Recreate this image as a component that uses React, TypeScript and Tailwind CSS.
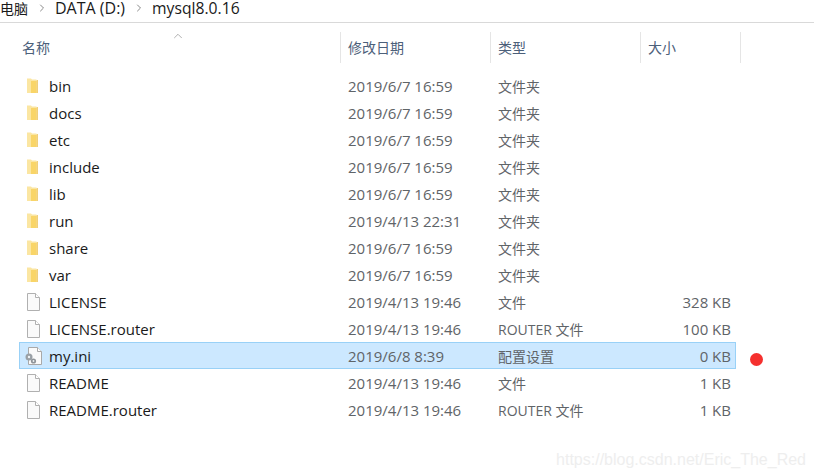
import { ChevronRight, ChevronUp } from "lucide-react";

type Entry = { name: string; date: string; kind: string; size?: string; icon: "folder" | "file" | "ini" };

const entries: Entry[] = [
  { name: "bin", date: "2019/6/7 16:59", kind: "文件夹", icon: "folder" },
  { name: "docs", date: "2019/6/7 16:59", kind: "文件夹", icon: "folder" },
  { name: "etc", date: "2019/6/7 16:59", kind: "文件夹", icon: "folder" },
  { name: "include", date: "2019/6/7 16:59", kind: "文件夹", icon: "folder" },
  { name: "lib", date: "2019/6/7 16:59", kind: "文件夹", icon: "folder" },
  { name: "run", date: "2019/4/13 22:31", kind: "文件夹", icon: "folder" },
  { name: "share", date: "2019/6/7 16:59", kind: "文件夹", icon: "folder" },
  { name: "var", date: "2019/6/7 16:59", kind: "文件夹", icon: "folder" },
  { name: "LICENSE", date: "2019/4/13 19:46", kind: "文件", size: "328 KB", icon: "file" },
  { name: "LICENSE.router", date: "2019/4/13 19:46", kind: "ROUTER 文件", size: "100 KB", icon: "file" },
  { name: "my.ini", date: "2019/6/8 8:39", kind: "配置设置", size: "0 KB", icon: "ini" },
  { name: "README", date: "2019/4/13 19:46", kind: "文件", size: "1 KB", icon: "file" },
  { name: "README.router", date: "2019/4/13 19:46", kind: "ROUTER 文件", size: "1 KB", icon: "file" },
];

function FolderIcon() {
  return (
    <svg width="16" height="18" viewBox="0 0 16 18">
      <path d="M2 1.5h4l1 1h4.5v1.5H13v12H2z" fill="#fbe6a2" />
      <path d="M6 4h5.5v12H6z" fill="#f9d568" />
      <path d="M11.5 3h1.5v13h-1.5z" fill="#f0cf7a" />
    </svg>
  );
}

function FileIcon() {
  return (
    <svg width="16" height="18" viewBox="0 0 16 18">
      <path d="M2.5 0.5h8l4 4v13h-12z" fill="#fafafa" stroke="#b0b0b0" />
      <path d="M10.5 0.5v4h4" fill="#fff" stroke="#b0b0b0" />
    </svg>
  );
}

function IniIcon() {
  return (
    <svg width="17" height="18" viewBox="0 0 17 18">
      <path d="M3.5 0.5h9l4 4v13h-13z" fill="#fafafa" stroke="#a9a9a9" />
      <path d="M12.5 0.5v4h4" fill="#fff" stroke="#a9a9a9" />
      <circle cx="4" cy="10" r="3.5" fill="#9aa0a6" />
      <circle cx="4" cy="10" r="1.2" fill="#eef2f5" />
      <circle cx="8.5" cy="14" r="2.6" fill="#8f9499" />
      <circle cx="8.5" cy="14" r="0.9" fill="#eef2f5" />
    </svg>
  );
}

function Row({ entry }: { entry: Entry }) {
  const selected = entry.name === "my.ini";
  return (
    <div
      className={`flex h-[27px] w-[717px] items-center border ${
        selected ? "border-[#99d1f7] bg-[#cce8ff]" : "border-transparent"
      }`}
    >
      <div className="flex w-[320px] items-center">
        <div className="flex w-[29px] pl-[5px]">
          {entry.icon === "folder" && <FolderIcon />}
          {entry.icon === "file" && <FileIcon />}
          {entry.icon === "ini" && <IniIcon />}
        </div>
        <span className="pt-[2px] text-[15px] text-[#1a1a1a]">{entry.name}</span>
      </div>
      <div className="w-[150px] pl-[8px] pt-[2px] text-[15px] text-[#5f6468]">{entry.date}</div>
      <div className="w-[150px] pl-[8px] pt-[2px] text-[14px] text-[#5f6468]">{entry.kind}</div>
      <div className="w-[91px] pt-[2px] text-right text-[15px] text-[#5f6468]">{entry.size}</div>
    </div>
  );
}

function HeaderCell({ label, width }: { label: string; width: string }) {
  return (
    <div className={`flex h-[31px] items-center border-l border-[#e5e5e5] pl-[7px] text-[14px] text-[#4c607a] ${width}`}>
      {label}
    </div>
  );
}

export default function App() {
  return (
    <div
      className="relative h-[475px] w-[814px] overflow-hidden bg-white"
      style={{ fontFamily: '"Open Sans", "Noto Sans CJK SC", sans-serif' }}
    >
      {/* Breadcrumb */}
      <div className="flex h-[23px] items-start border-b border-[#d9d9d9] leading-[17px] text-[#1a1a1a]">
        <span className="text-[14px]">电脑</span>
        <ChevronRight size={12} strokeWidth={2} className="mx-[7.5px] mt-[2px] text-[#8a8a8a]" />
        <span className="text-[16px]">DATA (D:)</span>
        <ChevronRight size={12} strokeWidth={2} className="mx-[7.5px] mt-[2px] text-[#8a8a8a]" />
        <span className="text-[15.7px]">mysql8.0.16</span>
      </div>

      {/* Column headers */}
      <div className="relative ml-[20px] mt-[9px] flex">
        <div className="flex h-[31px] w-[320px] items-center pl-[2px] text-[14px] text-[#4c607a]">名称</div>
        <ChevronUp size={14} strokeWidth={1} className="absolute left-[151px] top-[-3px] text-[#7a7a7a]" />
        <HeaderCell label="修改日期" width="w-[150px]" />
        <HeaderCell label="类型" width="w-[150px]" />
        <HeaderCell label="大小" width="w-[100px]" />
        <div className="h-[31px] border-l border-[#e5e5e5]" />
      </div>

      {/* File list */}
      <div className="ml-[19px] mt-[9px] flex flex-col">
        {entries.map((entry) => (
          <Row key={entry.name} entry={entry} />
        ))}
      </div>

      {/* Annotation dot */}
      <div className="absolute left-[750px] top-[353px] h-[13px] w-[13px] rounded-full bg-[#f5302e]" />

      {/* Watermark */}
      <div className="absolute right-[8px] top-[448px] text-[16px] text-[#eeeeee]" style={{ fontFamily: '"Liberation Sans", sans-serif' }}>
        https://blog.csdn.net/Eric_The_Red
      </div>
    </div>
  );
}
